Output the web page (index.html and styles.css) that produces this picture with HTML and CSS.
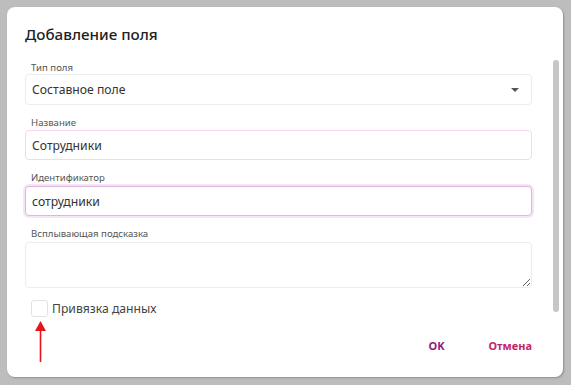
FILE: index.html
```html
<!DOCTYPE html>
<html lang="ru">
<head>
<meta charset="utf-8">
<title>Добавление поля</title>
<link rel="stylesheet" href="styles.css">
</head>
<body>
<div class="backdrop">
  <div class="dialog">
    <div class="main">
      <h2 class="title">Добавление поля</h2>
      <div class="form">
        <div class="field">
          <div class="label">Тип поля</div>
          <div class="box select">
            <span>Составное поле</span>
            <span class="caret"></span>
          </div>
        </div>
        <div class="field">
          <div class="label">Название</div>
          <div class="box input pink">Сотрудники</div>
        </div>
        <div class="field">
          <div class="label">Идентификатор</div>
          <div class="box input focused">сотрудники</div>
        </div>
        <div class="field">
          <div class="label">Всплывающая подсказка</div>
          <textarea class="box textarea"></textarea>
        </div>
        <label class="check-row">
          <span class="checkbox"></span>
          <span class="check-label">Привязка данных</span>
        </label>
      </div>
      <div class="actions">
        <button class="btn ok">OK</button>
        <button class="btn cancel">Отмена</button>
      </div>
    </div>
    <div class="rail"><div class="thumb"></div></div>
    <svg class="arrow" width="13" height="42" viewBox="0 0 13 42">
      <polygon points="6.5,0 12,10 1,10" fill="#e8141c"/>
      <line x1="6.5" y1="9" x2="6.5" y2="41" stroke="#e8141c" stroke-width="1.6"/>
    </svg>
  </div>
</div>
</body>
</html>
```
FILE: styles.css
```css
html, body {
  margin: 0;
  height: 385px;
  overflow: hidden;
}
body {
  background: #bdbdbd;
  font-family: "Noto Sans", "Open Sans", sans-serif;
}
.backdrop {
  padding: 7px 8px 8px 7px;
}
.dialog {
  position: relative;
  width: 556px;
  height: 370px;
  background: #fff;
  border-radius: 8px;
  box-shadow: 1px 1px 2px rgba(0,0,0,0.25);
  display: flex;
}
.main {
  flex: 1;
  padding: 16px 0 0 18px;
  display: flex;
  flex-direction: column;
}
.title {
  margin: 0;
  font-size: 15.2px;
  line-height: 22px;
  font-weight: 500;
  color: #222;
}
.form {
  margin-top: 17px;
  display: flex;
  flex-direction: column;
  gap: 12px;
}
.label {
  font-size: 9.6px;
  line-height: 12px;
  padding-left: 6px;
  color: #555;
}
.box {
  box-sizing: border-box;
  width: 100%;
  border: 1px solid #ececec;
  border-radius: 4px;
  font-family: inherit;
  font-size: 12.2px;
  color: #333;
  background: #fff;
}
.select {
  height: 31px;
  display: flex;
  align-items: center;
  justify-content: space-between;
  padding: 0 12px 0 6px;
}
.caret {
  width: 0;
  height: 0;
  border-left: 4px solid transparent;
  border-right: 4px solid transparent;
  border-top: 4px solid #555;
}
.input {
  height: 30px;
  display: flex;
  align-items: center;
  padding: 0 6px;
  margin-top: 1px;
}
.pink {
  border-color: #f8d6f2;
}
.focused {
  border-color: #dcb7db;
  box-shadow: 0 0 0 2px #f6e6f5;
  margin-top: 2px;
}
.textarea {
  display: block;
  height: 46px;
  margin-top: 2px;
  resize: vertical;
  outline: none;
}
.check-row {
  display: flex;
  align-items: center;
  gap: 4px;
  padding-left: 6px;
}
.checkbox {
  box-sizing: border-box;
  width: 17px;
  height: 17px;
  border: 1px solid #e2e2e2;
  border-radius: 3px;
}
.check-label {
  font-size: 12.2px;
  color: #444;
}
.actions {
  margin-top: 15px;
  margin-right: -8px;
  display: flex;
  justify-content: flex-end;
  gap: 28px;
}
.btn {
  border: none;
  background: none;
  font-family: inherit;
  font-size: 11px;
  line-height: 16px;
  font-weight: 700;
  padding: 6px 8px;
}
.ok {
  color: #8c237e;
}
.cancel {
  color: #c4266b;
}
.rail {
  width: 31px;
  box-sizing: border-box;
  padding: 53px 4px 0 21px;
}
.thumb {
  width: 6px;
  height: 252px;
  background: #c6c6c6;
  border-radius: 3px;
}
.arrow {
  position: absolute;
  left: 27px;
  top: 314px;
}
```
